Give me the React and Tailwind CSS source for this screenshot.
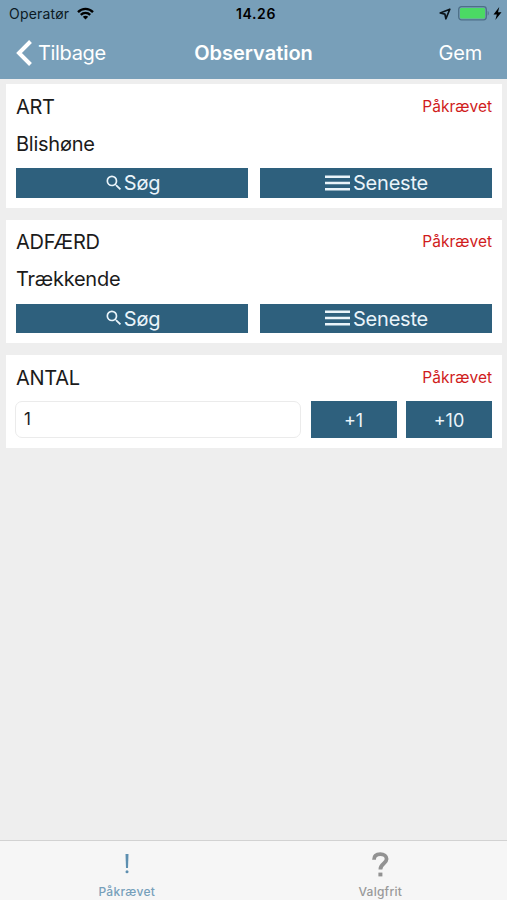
import { MdSearch } from "react-icons/md";

const tabs = [
  { id: "required", label: "Påkrævet", active: true },
  { id: "optional", label: "Valgfrit", active: false },
];

function StatusBar() {
  return (
    <div className="grid h-[27px] grid-cols-3 items-center pl-[9px] pr-[5px] text-[14px] text-[#0c1a24]">
      <div className="flex items-center gap-[7.5px]">
        <span className="tracking-[0.2px]">Operatør</span>
        <svg className="-mt-[1px]" width="17" height="13" viewBox="0 0 17 13" fill="none" stroke="#000" strokeWidth="2.3">
          <path d="M1 5.1C5.2 .7 11.8 .7 16 5.1" />
          <path d="M3.8 7.9C6.4 5.2 10.6 5.2 13.2 7.9" />
          <path d="M8.5 12.5L5.8 9.7C7.3 8.3 9.7 8.3 11.2 9.7Z" fill="#000" stroke="none" />
        </svg>
      </div>
      <span className="pl-[1px] text-center font-semibold tracking-[0.6px] text-black">14.26</span>
      <div className="flex items-center justify-end">
        <svg width="12" height="12" viewBox="0 0 12 12" fill="none" stroke="#0a1319" strokeWidth="1.7" strokeLinejoin="round">
          <path d="M10.8 1.2L1.2 5L5.9 6.1L6.9 10.8Z" />
        </svg>
        <svg className="ml-[7px]" width="32" height="15" viewBox="0 0 32 15">
          <rect x=".7" y=".7" width="27.6" height="13.2" rx="2.8" fill="none" stroke="#4d6f87" strokeWidth="1.3" />
          <rect x="2" y="2" width="25" height="10.6" rx="1.4" fill="#4bd964" />
          <path d="M29.7 5c1.3.5 1.3 4 0 4.6Z" fill="#4d6f87" />
        </svg>
        <svg className="ml-[3px]" width="9" height="13" viewBox="0 0 8 12">
          <path d="M5.6 0L.3 6.9H3.4L2 12L7.7 4.8H4.5Z" fill="#000" />
        </svg>
      </div>
    </div>
  );
}

function NavBar() {
  return (
    <div className="grid h-[52px] grid-cols-[1fr_auto_1fr] items-center px-4 text-[20px] text-white">
      <button className="flex items-center gap-[6px]">
        <svg width="16" height="26" viewBox="0 0 16 26" fill="none" stroke="#fff" strokeWidth="4">
          <path d="M14.5 1.5L3 13L14.5 24.5" />
        </svg>
        <span className="tracking-[-0.35px]">Tilbage</span>
      </button>
      <h1 className="text-center font-semibold">Observation</h1>
      <button className="pr-[9px] text-right tracking-[-0.2px]">Gem</button>
    </div>
  );
}

function Card({ title, children }) {
  return (
    <section className="bg-white px-[10px] pt-[8px] pb-[10px]">
      <div className="flex h-[29px] items-center justify-between">
        <h2 className="text-[20px] tracking-[-0.3px]">{title}</h2>
        <span className="text-[15.5px] text-[#d01c1c]">Påkrævet</span>
      </div>
      {children}
    </section>
  );
}

function MenuLines() {
  return (
    <svg width="25" height="16" viewBox="0 0 25 16" stroke="#eaf4fa" strokeWidth="2.6">
      <path d="M0 1.7H25M0 8H25M0 14.3H25" />
    </svg>
  );
}

function PickerCard({ title, value }) {
  return (
    <Card title={title}>
      <p className="mt-[7.5px] h-[31px] text-[20px] leading-[31px] tracking-[-0.25px]">{value}</p>
      <div className="mt-[8.5px] grid grid-cols-2 gap-3">
        <button className="flex h-[29.5px] items-center justify-center bg-[#2e607d] text-[20px] text-[#eaf4fa]">
          <MdSearch size={20} />
          <span className="pt-[1px] tracking-[-0.2px]">Søg</span>
        </button>
        <button className="flex h-[29.5px] items-center justify-center gap-[3px] bg-[#2e607d] pl-[1px] text-[20px] text-[#eaf4fa]">
          <MenuLines />
          <span className="pt-[1px] tracking-[-0.2px]">Seneste</span>
        </button>
      </div>
    </Card>
  );
}

function CountCard() {
  return (
    <Card title="ANTAL">
      <div className="mt-[9px] flex h-[37px] gap-[9.5px]">
        <input
          className="-ml-[1px] min-w-0 flex-1 rounded-[7px] border border-[#ebebeb] px-2 text-[17px] outline-none"
          defaultValue="1"
        />
        <button className="w-[86px] bg-[#2e607d] pt-[1px] text-[18px] text-[#eaf4fa]">+1</button>
        <button className="w-[86px] bg-[#2e607d] pt-[1px] text-[18px] text-[#eaf4fa]">+10</button>
      </div>
    </Card>
  );
}

function TabIcon({ id }) {
  if (id === "required") {
    return (
      <svg width="6" height="20" viewBox="0 0 6 20" fill="#5d8fb0">
        <path d="M1.5 0H4.5L4 14H2Z" />
        <circle cx="3" cy="17.8" r="1.5" />
      </svg>
    );
  }
  return (
    <svg width="17" height="25" viewBox="0 0 17 25" fill="none" stroke="#929292" strokeWidth="3.8">
      <path d="M2 7.8C2 4 4.6 2.2 8.3 2.2C12 2.2 14.6 4 14.6 7.1C14.6 11.6 8.4 11.7 8.4 17.4" />
      <path d="M6.4 22.5H10.4" strokeWidth="3.8" />
    </svg>
  );
}

function TabBar() {
  return (
    <nav className="grid h-[60px] grid-cols-2 border-t border-[#d2d2d2] bg-[#f6f6f6]">
      {tabs.map((tab) => (
        <button key={tab.id} className="flex flex-col items-center pt-[10px]">
          <span className="flex h-[26px] items-center">
            <TabIcon id={tab.id} />
          </span>
          <span
            className={
              tab.active
                ? "mt-[7px] text-[12px] leading-[16px] font-medium tracking-[0.25px] text-[#76a0bb]"
                : "mt-[7px] text-[12px] leading-[16px] font-medium tracking-[0.25px] text-[#999999]"
            }
          >
            {tab.label}
          </span>
        </button>
      ))}
    </nav>
  );
}

export default function App() {
  return (
    <div className="flex h-screen w-full flex-col overflow-hidden bg-[#eeeeee] font-['Inter',sans-serif] text-[#1b1b1b]">
      <header className="bg-[#789fb9]">
        <StatusBar />
        <NavBar />
      </header>
      <main className="flex flex-1 flex-col gap-3 pt-[5px] pr-[5px] pl-[6px]">
        <PickerCard title="ART" value="Blishøne" />
        <PickerCard title="ADFÆRD" value="Trækkende" />
        <CountCard />
      </main>
      <TabBar />
    </div>
  );
}
